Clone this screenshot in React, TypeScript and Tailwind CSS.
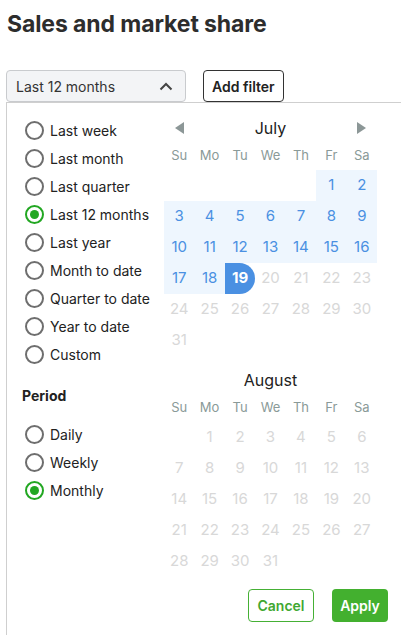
import React from "react";

const font = { fontFamily: "Inter, 'Noto Sans', sans-serif" };

function Radio({ label, checked }: { label: string; checked?: boolean }) {
  return (
    <div className="flex items-center h-[28px]">
      <span
        className={
          "flex items-center justify-center w-[19px] h-[19px] rounded-full border-2 " +
          (checked ? "border-[#22a722]" : "border-[#6e6e6e]")
        }
      >
        {checked && <span className="w-[9px] h-[9px] rounded-full bg-[#22a722]" />}
      </span>
      <span className="ml-[6px] text-[14px] text-[#222]">{label}</span>
    </div>
  );
}

const days = ["Su", "Mo", "Tu", "We", "Th", "Fr", "Sa"];

function Month({
  name,
  startDay,
  len,
  arrows,
  highlightTo,
}: {
  name: string;
  startDay: number;
  len: number;
  arrows?: boolean;
  highlightTo?: number;
}) {
  const cells: (number | null)[] = [];
  for (let i = 0; i < startDay; i++) cells.push(null);
  for (let d = 1; d <= len; d++) cells.push(d);
  while (cells.length % 7 !== 0) cells.push(null);
  return (
    <div>
      <div className="flex items-center justify-between h-[28px] px-[10px]">
        <span className="w-[12px] flex justify-center">
          {arrows && (
            <svg width="10" height="12" viewBox="0 0 10 12">
              <path d="M9 0 L0 6 L9 12 Z" fill="#8c9797" />
            </svg>
          )}
        </span>
        <span className="text-[16px] text-[#222]">{name}</span>
        <span className="w-[12px] flex justify-center">
          {arrows && (
            <svg width="10" height="12" viewBox="0 0 10 12">
              <path d="M1 0 L10 6 L1 12 Z" fill="#8c9797" />
            </svg>
          )}
        </span>
      </div>
      <div className="grid grid-cols-7 h-[28px] items-center">
        {days.map((d) => (
          <div key={d} className="text-center text-[13px] text-[#8a9a98]">
            {d}
          </div>
        ))}
      </div>
      <div className="grid grid-cols-7">
        {cells.map((c, i) => {
          const hl = highlightTo !== undefined && c !== null && c < highlightTo;
          const sel = highlightTo !== undefined && c === highlightTo;
          return (
            <div
              key={i}
              className={
                "h-[31px] flex items-center justify-center text-[15px] " +
                (sel
                  ? "bg-[#4a90e2] text-white font-bold rounded-r-full"
                  : hl
                  ? "bg-[#eef6fe] text-[#4a90e2]"
                  : "text-[#d8d8d8]")
              }
            >
              {c ?? ""}
            </div>
          );
        })}
      </div>
    </div>
  );
}

export default function App() {
  return (
    <div className="w-[403px] h-[639px] bg-white overflow-hidden" style={font}>
      <h1 className="pl-[7px] pt-[9px] text-[23px] font-bold text-[#2d2d2d] leading-[30px] tracking-[-0.1px]">
        Sales and market share
      </h1>
      <div className="flex items-center gap-[17px] pl-[6px] mt-[31px]">
        <div className="w-[180px] h-[32px] rounded-[4px] border border-[#c9cbce] bg-[#f3f4f6] flex items-center justify-between pl-[9px] pr-[12px]">
          <span className="text-[14px] text-[#333]">Last 12 months</span>
          <svg width="14" height="9" viewBox="0 0 14 9">
            <path d="M1.5 7.5 L7 2 L12.5 7.5" stroke="#444" strokeWidth="2" fill="none" />
          </svg>
        </div>
        <button className="h-[32px] px-[8px] rounded-[4px] border border-[#333] text-[14px] font-semibold text-[#222] bg-white">
          Add filter
        </button>
      </div>
      <div className="ml-[6px] w-[395px] h-[533px] border-l border-t border-[#cfcfcf] flex flex-col">
        <div className="flex">
          <div className="w-[157px] pl-[18px] pt-[13px]">
            {[
              "Last week",
              "Last month",
              "Last quarter",
              "Last 12 months",
              "Last year",
              "Month to date",
              "Quarter to date",
              "Year to date",
              "Custom",
            ].map((l) => (
              <Radio key={l} label={l} checked={l === "Last 12 months"} />
            ))}
            <div className="h-[28px] mt-[13px] flex items-center text-[14px] font-bold text-[#222] -ml-[3px]">
              Period
            </div>
            <div className="mt-[11px]">
              <Radio label="Daily" />
              <Radio label="Weekly" />
              <Radio label="Monthly" checked />
            </div>
          </div>
          <div className="w-[213px] pt-[11px]">
            <Month name="July" startDay={5} len={31} arrows highlightTo={19} />
            <div className="mt-[10px]">
              <Month name="August" startDay={1} len={31} />
            </div>
          </div>
        </div>
        <div className="flex justify-end gap-[18px] pr-[13px] mt-[12px]">
          <button className="h-[33px] w-[66px] rounded-[4px] border border-[#45b035] text-[#3fa832] text-[14px] font-semibold bg-white">
            Cancel
          </button>
          <button className="h-[33px] w-[56px] rounded-[4px] bg-[#43b02f] text-white text-[14px] font-semibold">
            Apply
          </button>
        </div>
      </div>
    </div>
  );
}
